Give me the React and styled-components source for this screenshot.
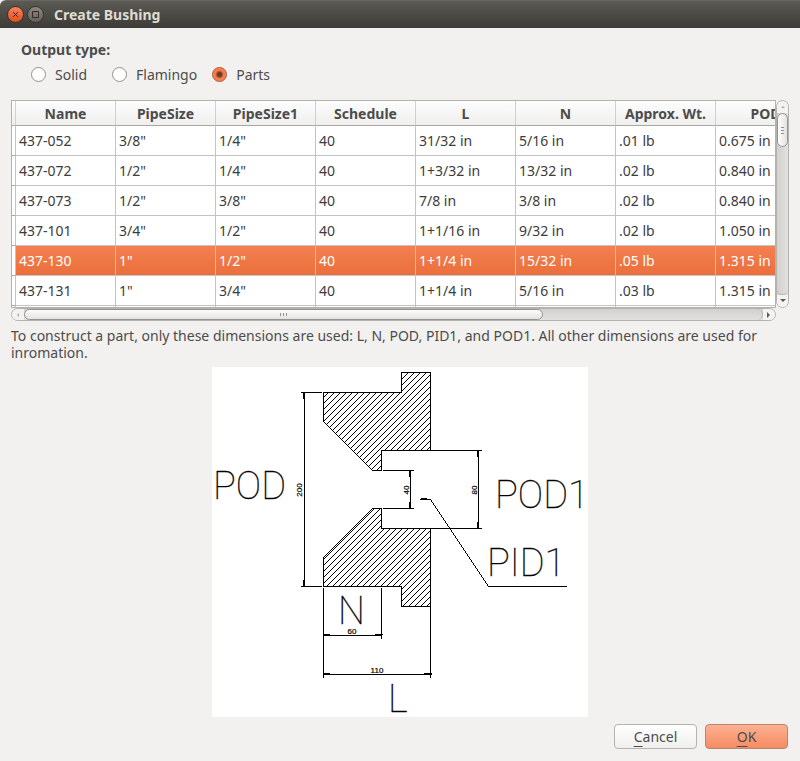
import React, { useState } from "react";
import styled, { createGlobalStyle } from "styled-components";

const GlobalStyle = createGlobalStyle`
  * { box-sizing: border-box; }
  body {
    margin: 0;
    background: #f2f1f0;
    color: #4c4c4c;
    font-family: "Noto Sans", "Open Sans", sans-serif;
    font-size: 14px;
    line-height: 17px;
  }
  button, input { font: inherit; color: inherit; }
`;

const Dialog = styled.main`
  display: flex;
  flex-direction: column;
`;

const TitleBar = styled.header`
  display: flex;
  align-items: center;
  height: 28px;
  padding: 0 7px;
  gap: 3px;
  background: linear-gradient(#5c5a53, #3c3b37);
  border-top: 1px solid #69675f;
  border-top-left-radius: 6px;
  color: #dfdbd2;
`;

const Title = styled.h1`
  margin: 0 0 0 7px;
  font-size: 14px;
  font-weight: 700;
`;

const WindowButton = styled.button`
  display: flex;
  align-items: center;
  justify-content: center;
  width: 17px;
  height: 17px;
  padding: 0;
  border: 1px solid #34332f;
  border-radius: 50%;
  color: #3b2a22;
  background: ${(p) =>
    p.$close
      ? "linear-gradient(#f5835c, #e2501c)"
      : "linear-gradient(#8a8880, #64625a)"};
`;

const Content = styled.div`
  display: flex;
  flex-direction: column;
  padding: 13px 11px 12px;
`;

const OutputGroup = styled.fieldset`
  margin: 0;
  padding: 0 10px;
  border: 0;
`;

const GroupTitle = styled.legend`
  padding: 0;
  font-weight: 700;
`;

const RadioRow = styled.div`
  display: flex;
  margin: 8px 0 17px 10px;
  gap: 15px;
`;

const RadioLabel = styled.label`
  display: flex;
  align-items: center;
  gap: 9px;
  min-width: ${(p) => p.$width || 0}px;
`;

const Radio = styled.input`
  appearance: none;
  width: 15px;
  height: 15px;
  margin: 0;
  border: 1px solid #93918d;
  border-radius: 50%;
  background: #fff;
  &:checked {
    border-color: #b5512c;
    background: radial-gradient(circle, #6b3a28 0 2px, #f07746 4px, #f58a5f 7px);
  }
`;

const TablePanel = styled.div`
  display: grid;
  grid-template-columns: minmax(0, 1fr) 13px;
`;

const Viewport = styled.div`
  height: 208px;
  overflow: hidden;
  border: 1px solid #b4b2af;
  background: #fff;
`;

const DataTable = styled.table`
  width: 804px;
  table-layout: fixed;
  border-collapse: separate;
  border-spacing: 0;
  color: #3c3c3c;
`;

const StubCol = styled.col`
  width: 4px;
`;

const HeadCell = styled.th`
  height: 25px;
  padding: 0;
  border-right: 1px solid #d2d0ce;
  border-bottom: 1px solid #a9a7a4;
  background: linear-gradient(#fdfdfd, #f0efee);
  color: #4c4c4c;
  font-weight: 700;
  text-align: center;
`;

const Stub = styled.td`
  height: 30px;
  padding: 0;
  border-right: 1px solid #c6c4c2;
  border-bottom: 1px solid #a9a7a4;
`;

const Cell = styled.td`
  height: 30px;
  padding: 0 3px;
  border-right: 1px solid #c6c4c2;
  border-bottom: 1px solid #c6c4c2;
  white-space: nowrap;
`;

const Row = styled.tr`
  ${(p) =>
    p.$selected &&
    `
    color: #fff;
    ${Cell} { background: linear-gradient(#f47f50, #ea6f3c); }
  `}
`;

const VerticalBar = styled.div`
  display: flex;
  flex-direction: column;
  border: 1px solid #b4b2af;
  border-radius: 7px;
  background: linear-gradient(90deg, #d3d1ce, #e2e0de);
  overflow: hidden;
`;

const HorizontalBar = styled.div`
  display: flex;
  height: 13px;
  border: 1px solid #b4b2af;
  border-radius: 7px;
  background: linear-gradient(#d3d1ce, #e2e0de);
  overflow: hidden;
`;

const ArrowButton = styled.button`
  display: flex;
  flex: none;
  align-items: center;
  justify-content: center;
  width: ${(p) => (p.$vertical ? "100%" : "12px")};
  height: ${(p) => (p.$vertical ? "12px" : "100%")};
  padding: 0;
  border: 0;
  background: #f4f3f2;
  color: ${(p) => (p.$dim ? "#a9a7a4" : "#5c5a58")};
`;

const Thumb = styled.div`
  display: flex;
  flex: none;
  align-items: center;
  justify-content: center;
  border: 1px solid #96938f;
  border-radius: 7px;
  color: #96938f;
  width: ${(p) => (p.$vertical ? "100%" : "68%")};
  height: ${(p) => (p.$vertical ? "34px" : "100%")};
  background: linear-gradient(
    ${(p) => (p.$vertical ? "90deg" : "180deg")},
    #fdfdfd,
    #e4e2e0
  );
`;

const Track = styled.div`
  flex: 1;
  border: 0 solid #b4b2af;
  border-width: ${(p) => (p.$vertical ? "0 0 1px" : "0 1px 0 0")};
  border-radius: ${(p) => (p.$vertical ? "0 0 6px 6px" : "0 6px 6px 0")};
`;

const Note = styled.p`
  margin: 6px 0;
`;

const Drawing = styled.svg`
  display: block;
  align-self: center;
  width: 376px;
  max-width: 100%;
  background: #fff;
`;

const Label = styled.text`
  font-family: Roboto, sans-serif;
  font-size: 38px;
  font-weight: 100;
  fill: #000;
  stroke: #000;
  stroke-width: 0.3px;
`;

const Dimension = styled.text`
  font-family: "Liberation Sans", sans-serif;
  font-size: 8px;
  fill: #000;
  stroke: #000;
  stroke-width: 0.2px;
  text-anchor: middle;
`;

const Footer = styled.footer`
  display: flex;
  justify-content: flex-end;
  gap: 8px;
  margin-top: 7px;
  padding-right: 1px;
`;

const ActionButton = styled.button`
  width: 83px;
  height: 25px;
  padding: 0;
  border: 1px solid ${(p) => (p.$primary ? "#b98570" : "#b5b3b0")};
  border-radius: 4px;
  background: ${(p) =>
    p.$primary
      ? "linear-gradient(#fdb092, #f58c63)"
      : "linear-gradient(#ffffff, #f0efee)"};
`;

const Mnemonic = styled.span`
  text-decoration: underline;
  text-underline-offset: 4px;
  text-decoration-thickness: 1px;
`;

const columns = ["Name", "PipeSize", "PipeSize1", "Schedule", "L", "N", "Approx. Wt.", "POD"];

const rows = [
  ["437-052", '3/8"', '1/4"', "40", "31/32 in", "5/16 in", ".01 lb", "0.675 in"],
  ["437-072", '1/2"', '1/4"', "40", "1+3/32 in", "13/32 in", ".02 lb", "0.840 in"],
  ["437-073", '1/2"', '3/8"', "40", "7/8 in", "3/8 in", ".02 lb", "0.840 in"],
  ["437-101", '3/4"', '1/2"', "40", "1+1/16 in", "9/32 in", ".02 lb", "1.050 in"],
  ["437-130", '1"', '1/2"', "40", "1+1/4 in", "15/32 in", ".05 lb", "1.315 in"],
  ["437-131", '1"', '3/4"', "40", "1+1/4 in", "5/16 in", ".03 lb", "1.315 in"],
  ["", "", "", "", "", "", "", ""],
];

const outputTypes = [
  { name: "Solid", width: 66 },
  { name: "Flamingo", width: 82 },
  { name: "Parts" },
];

const arrows = {
  up: "M2 5 L4 3 L6 5 Z",
  down: "M1 2 L7 2 L4 5 Z",
  left: "M5 2 L3 4 L5 6 Z",
  right: "M2 1 L5 4 L2 7 Z",
};

function Arrow({ direction }) {
  return (
    <svg width="8" height="8" viewBox="0 0 8 8" aria-hidden="true">
      <path d={arrows[direction]} fill="currentColor" />
    </svg>
  );
}

function Grip({ vertical }) {
  return (
    <svg width="9" height="9" viewBox="0 0 9 9" stroke="currentColor" aria-hidden="true">
      <path
        shapeRendering="crispEdges"
        d={vertical ? "M3 1.5H6M3 4.5H6M3 7.5H6" : "M1.5 3V6M4.5 3V6M7.5 3V6"}
      />
    </svg>
  );
}

function PartsTable() {
  const [selected, setSelected] = useState(4);
  return (
    <DataTable>
      <colgroup>
        <StubCol />
        {columns.map((c) => (
          <col key={c} />
        ))}
      </colgroup>
      <thead>
        <tr>
          <HeadCell as="td" />
          {columns.map((c) => (
            <HeadCell key={c} scope="col">{c}</HeadCell>
          ))}
        </tr>
      </thead>
      <tbody>
        {rows.map((row, i) => (
          <Row key={i} $selected={i === selected} onClick={() => setSelected(i)}>
            <Stub />
            {row.map((value, j) => (
              <Cell key={columns[j]}>{value}</Cell>
            ))}
          </Row>
        ))}
      </tbody>
    </DataTable>
  );
}

function BushingDrawing() {
  return (
    <Drawing viewBox="212 367 376 350" role="img" aria-label="Bushing cross section">
      <defs>
        <pattern id="hatch" x="323" y="392" width="6" height="6" patternUnits="userSpaceOnUse">
          <path d="M0 5h1v1H0zM1 4h1v1H1zM2 3h1v1H2zM3 2h1v1H3zM4 1h1v1H4zM5 0h1v1H5z" shapeRendering="crispEdges" />
        </pattern>
      </defs>
      <g stroke="#000" fill="none" shapeRendering="crispEdges">
        <g fill="url(#hatch)">
          <path d="M323.5 392.5H401.5V372.5H430.5V450.5H381.5V470.5H372.5L323.5 421.5Z" />
          <path d="M323.5 586.5H401.5V606.5H430.5V528.5H381.5V508.5H372.5L323.5 557.5Z" />
        </g>
        <path d="M430 450.5H482M430 528.5H482M478.5 450V529" />
        <path d="M383 470.5H414M383 508.5H414M410.5 470V509" />
        <path d="M301 392.5H322M301 586.5H322M304.5 392V587" />
        <path d="M323.5 588V678M381.5 588V639M323 635.5H382" />
        <path d="M430.5 606V678M323 674.5H432" />
        <path d="M420 499.5H430.5L488.5 586.5H567" />
        <path d="M303.5 393V399M303.5 580V587M409.5 471V477M409.5 502V509M477.5 451V457M477.5 522V529" />
        <path d="M324 634.5H330M375 634.5H383M324 673.5H330M424 673.5H432M421 498.5H427" />
      </g>
      <Label x="213" y="499">POD</Label>
      <Label x="495" y="508">POD1</Label>
      <Label x="487" y="576">PID1</Label>
      <Label x="338" y="624">N</Label>
      <Label x="388" y="712">L</Label>
      <Dimension x="352" y="634">60</Dimension>
      <Dimension x="377" y="673">110</Dimension>
      <Dimension transform="translate(302 490) rotate(-90)">200</Dimension>
      <Dimension transform="translate(409 490) rotate(-90)">40</Dimension>
      <Dimension transform="translate(477 490) rotate(-90)">80</Dimension>
    </Drawing>
  );
}

export default function App() {
  const [output, setOutput] = useState("Parts");
  return (
    <Dialog>
      <GlobalStyle />
      <TitleBar>
        <WindowButton $close aria-label="Close">
          <svg width="7" height="7" viewBox="0 0 7 7" stroke="currentColor">
            <path d="M1 1L6 6M6 1L1 6" />
          </svg>
        </WindowButton>
        <WindowButton aria-label="Maximize">
          <svg width="7" height="7" viewBox="0 0 7 7" stroke="currentColor" fill="none">
            <path d="M.5 .5H6.5V6.5H.5Z" />
          </svg>
        </WindowButton>
        <Title>Create Bushing</Title>
      </TitleBar>
      <Content>
        <OutputGroup>
          <GroupTitle>Output type:</GroupTitle>
          <RadioRow>
            {outputTypes.map(({ name, width }) => (
              <RadioLabel key={name} $width={width}>
                <Radio
                  type="radio"
                  name="output"
                  checked={output === name}
                  onChange={() => setOutput(name)}
                />
                {name}
              </RadioLabel>
            ))}
          </RadioRow>
        </OutputGroup>
        <TablePanel>
          <Viewport>
            <PartsTable />
          </Viewport>
          <VerticalBar>
            <ArrowButton $vertical $dim aria-label="Scroll up"><Arrow direction="up" /></ArrowButton>
            <Thumb $vertical><Grip vertical /></Thumb>
            <Track $vertical />
            <ArrowButton $vertical aria-label="Scroll down"><Arrow direction="down" /></ArrowButton>
          </VerticalBar>
          <HorizontalBar>
            <ArrowButton $dim aria-label="Scroll left"><Arrow direction="left" /></ArrowButton>
            <Thumb><Grip /></Thumb>
            <Track />
            <ArrowButton aria-label="Scroll right"><Arrow direction="right" /></ArrowButton>
          </HorizontalBar>
        </TablePanel>
        <Note>
          To construct a part, only these dimensions are used: L, N, POD, PID1, and POD1. All
          other dimensions are used for inromation.
        </Note>
        <BushingDrawing />
        <Footer>
          <ActionButton><Mnemonic>C</Mnemonic>ancel</ActionButton>
          <ActionButton $primary><Mnemonic>O</Mnemonic>K</ActionButton>
        </Footer>
      </Content>
    </Dialog>
  );
}
